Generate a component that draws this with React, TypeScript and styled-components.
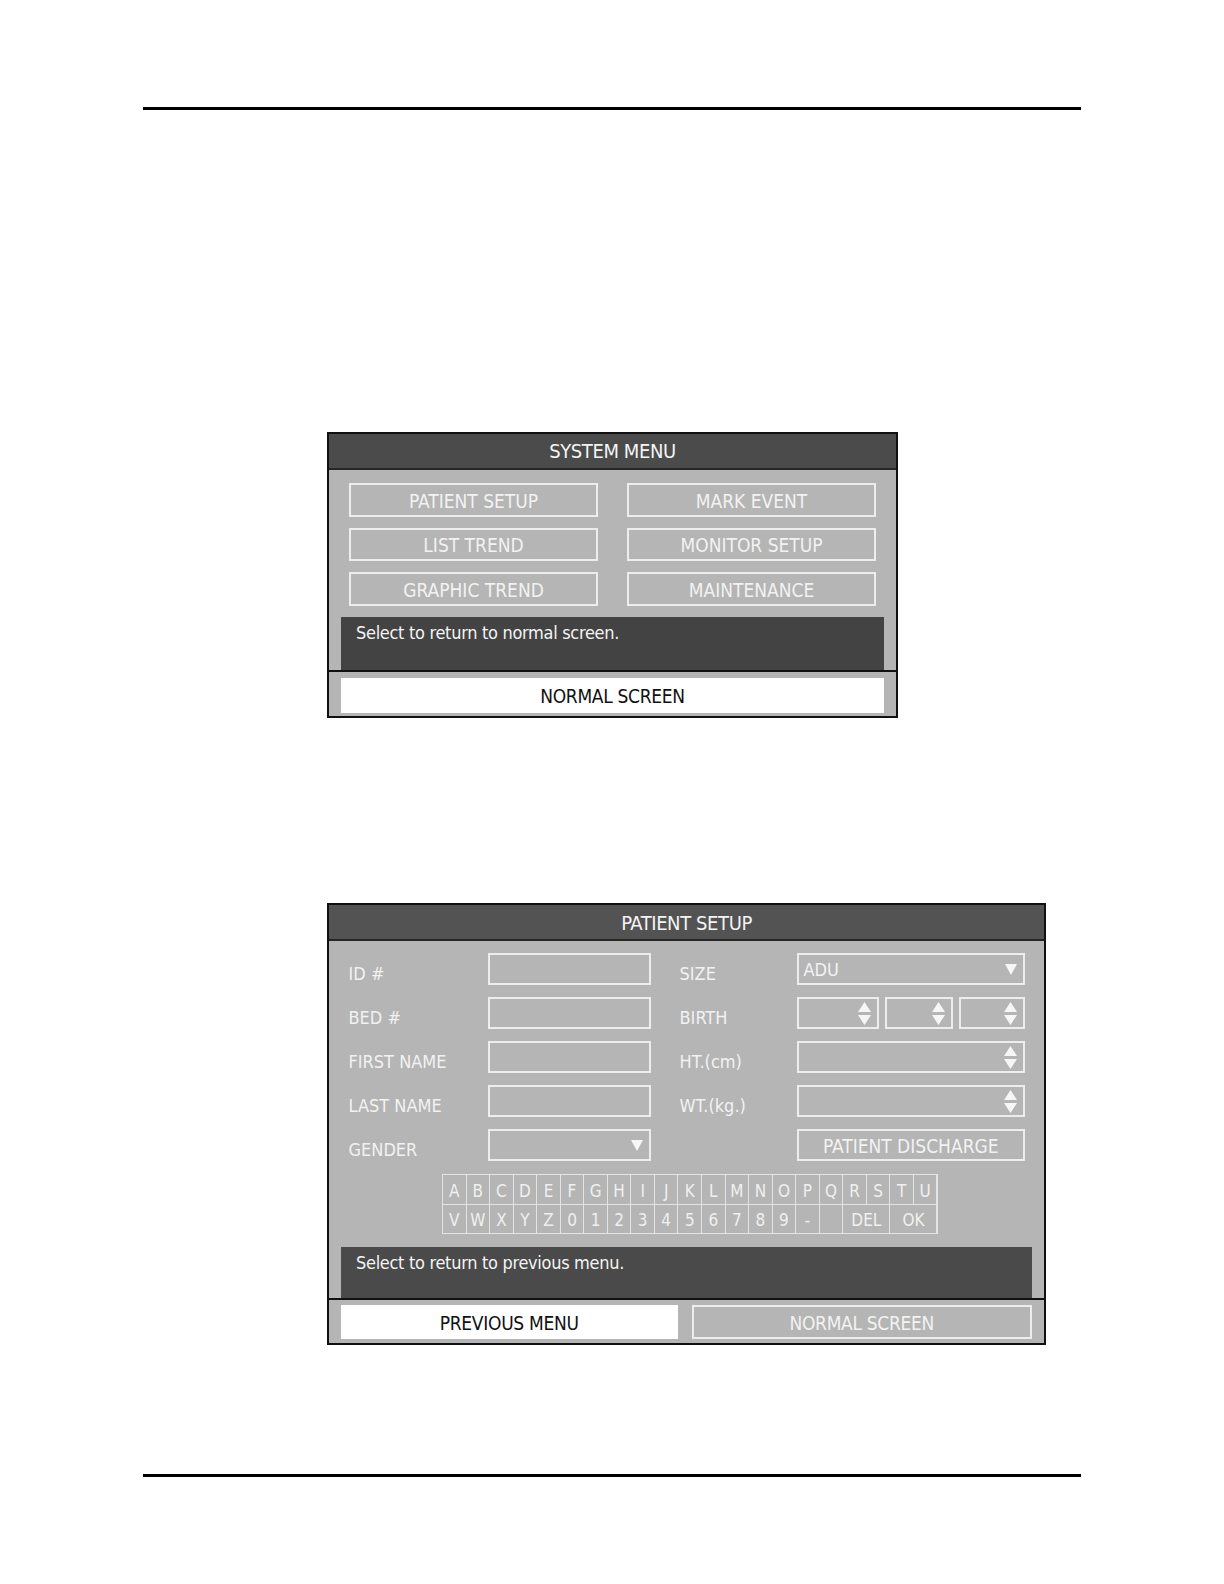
import React from "react";
import styled, { createGlobalStyle } from "styled-components";

const GlobalStyle = createGlobalStyle`
  html, body {
    margin: 0;
    padding: 0;
    background: #ffffff;
  }
`;

const FONT = `"Liberation Sans Narrow", "DejaVu Sans Condensed", "Liberation Sans", Arial, sans-serif`;

const Page = styled.div`
  width: 1224px;
  height: 1584px;
  box-sizing: border-box;
  padding: 107px 143px 0 143px;
  font-family: ${FONT};
`;

const Rule = styled.div<{ $top?: number }>`
  height: 3px;
  background: #000;
  margin-top: ${(p) => p.$top ?? 0}px;
`;

const Figure = styled.div<{ $top: number }>`
  margin-top: ${(p) => p.$top}px;
  margin-left: 184px;
`;

const Panel = styled.div<{ $w: number }>`
  width: ${(p) => p.$w}px;
  box-sizing: border-box;
  border: 2px solid #111;
  background: #b5b5b5;
`;

const TitleBar = styled.div<{ $tone?: string; $h: number }>`
  height: ${(p) => p.$h}px;
  box-sizing: border-box;
  background: ${(p) => p.$tone ?? "#4b4b4b"};
  border-bottom: 2px solid #262626;
  color: #f4f4f4;
  font-size: 20px;
  letter-spacing: -0.4px;
  display: flex;
  align-items: center;
  justify-content: center;
  padding-top: 1px;
`;

const Body = styled.div<{ $pt: number }>`
  padding: ${(p) => p.$pt}px 12px 0;
`;

/* ---------- system menu ---------- */

const MenuGrid = styled.div`
  display: grid;
  grid-template-columns: 249px 249px;
  grid-auto-rows: 33.5px;
  column-gap: 29px;
  row-gap: 11px;
  padding: 0 8px;
`;

const GhostButton = styled.div`
  box-sizing: border-box;
  border: 2px solid #ededed;
  color: #f2f2f2;
  font-size: 19px;
  display: flex;
  align-items: center;
  justify-content: center;
  padding-top: 2px;
`;

const Message = styled.div<{ $h: number; $mt: number; $tone: string }>`
  height: ${(p) => p.$h}px;
  margin-top: ${(p) => p.$mt}px;
  box-sizing: border-box;
  background: ${(p) => p.$tone};
  color: #f4f4f4;
  font-size: 18px;
  letter-spacing: -0.3px;
  padding: 5px 0 0 15px;
`;

const Footer = styled.div<{ $pt: number; $pb: number }>`
  border-top: 2px solid #111;
  padding: ${(p) => p.$pt}px 12px ${(p) => p.$pb}px;
  display: flex;
  gap: 14px;
`;

const SolidButton = styled.div<{ $h: number }>`
  flex: 1;
  height: ${(p) => p.$h}px;
  background: #fff;
  color: #111;
  font-size: 19px;
  letter-spacing: -0.3px;
  display: flex;
  align-items: center;
  justify-content: center;
  padding-top: 2px;
  box-sizing: border-box;
`;

const FooterGhost = styled(GhostButton)<{ $h: number }>`
  flex: 1;
  height: ${(p) => p.$h}px;
  letter-spacing: -0.3px;
`;

/* ---------- patient setup ---------- */

const Form = styled.div`
  display: grid;
  grid-template-columns: 139.5px 163px 28.5px 117px 228.5px;
  grid-auto-rows: 32.4px;
  row-gap: 11.6px;
  padding: 0 7px 0 7.5px;
`;

const Label = styled.div`
  color: #f2f2f2;
  font-size: 18px;
  display: flex;
  align-items: center;
  padding-top: 8px;
`;

const Field = styled.div`
  box-sizing: border-box;
  border: 2px solid #ededed;
  color: #f2f2f2;
  font-size: 18px;
  display: flex;
  align-items: center;
  justify-content: space-between;
  padding: 0 6px 0 5px;
`;

const Spacer = styled.div``;

const BirthRow = styled.div`
  display: grid;
  grid-template-columns: 82px 68px 66.5px;
  column-gap: 6px;
`;

const Keyboard = styled.div`
  width: 495.5px;
  margin: 13px 0 0 101px;
  box-sizing: border-box;
  display: grid;
  grid-template-columns: repeat(21, 1fr);
  grid-auto-rows: 28.5px;
  gap: 1px;
  padding: 1px;
  background: #e4e4e4;
`;

const Key = styled.div<{ $span?: number }>`
  grid-column: span ${(p) => p.$span ?? 1};
  background: #b5b5b5;
  color: #f0f0f0;
  font-size: 17px;
  display: flex;
  align-items: center;
  justify-content: center;
  padding-top: 2px;
`;

const DropArrow = () => (
  <svg width="12" height="11" viewBox="0 0 12 11">
    <polygon points="0,0 12,0 6,11" fill="#f6f6f6" />
  </svg>
);

const SpinArrows = () => (
  <svg width="13" height="23" viewBox="0 0 13 23">
    <polygon points="6.5,0 13,10 0,10" fill="#f6f6f6" />
    <polygon points="0,13 13,13 6.5,23" fill="#f6f6f6" />
  </svg>
);

const row1 = "ABCDEFGHIJKLMNOPQRSTU".split("");
const row2: { k: string; span?: number }[] = [
  ..."VWXYZ0123456789-".split("").map((k) => ({ k })),
  { k: "" },
  { k: "DEL", span: 2 },
  { k: "OK", span: 2 },
];

const App = () => {
  return (
    <Page>
      <GlobalStyle />
      <Rule />

      <Figure $top={322}>
        <Panel $w={571}>
          <TitleBar $h={35.5}>SYSTEM MENU</TitleBar>
          <Body $pt={13.5}>
            <MenuGrid>
              <GhostButton>PATIENT SETUP</GhostButton>
              <GhostButton>MARK EVENT</GhostButton>
              <GhostButton>LIST TREND</GhostButton>
              <GhostButton>MONITOR SETUP</GhostButton>
              <GhostButton>GRAPHIC TREND</GhostButton>
              <GhostButton>MAINTENANCE</GhostButton>
            </MenuGrid>
            <Message $h={53} $mt={11} $tone="#434343">
              Select to return to normal screen.
            </Message>
          </Body>
          <Footer $pt={6} $pb={3}>
            <SolidButton $h={35.5}>NORMAL SCREEN</SolidButton>
          </Footer>
        </Panel>
      </Figure>

      <Figure $top={185}>
        <Panel $w={719}>
          <TitleBar $tone="#535353" $h={36}>
            PATIENT SETUP
          </TitleBar>
          <Body $pt={12}>
            <Form>
              <Label>ID #</Label>
              <Field />
              <Spacer />
              <Label>SIZE</Label>
              <Field>
                ADU
                <DropArrow />
              </Field>

              <Label>BED #</Label>
              <Field />
              <Spacer />
              <Label>BIRTH</Label>
              <BirthRow>
                <Field>
                  <span />
                  <SpinArrows />
                </Field>
                <Field>
                  <span />
                  <SpinArrows />
                </Field>
                <Field>
                  <span />
                  <SpinArrows />
                </Field>
              </BirthRow>

              <Label>FIRST NAME</Label>
              <Field />
              <Spacer />
              <Label>HT.(cm)</Label>
              <Field>
                <span />
                <SpinArrows />
              </Field>

              <Label>LAST NAME</Label>
              <Field />
              <Spacer />
              <Label>WT.(kg.)</Label>
              <Field>
                <span />
                <SpinArrows />
              </Field>

              <Label>GENDER</Label>
              <Field>
                <span />
                <DropArrow />
              </Field>
              <Spacer />
              <Spacer />
              <GhostButton>PATIENT DISCHARGE</GhostButton>
            </Form>

            <Keyboard>
              {row1.map((k) => (
                <Key key={k}>{k}</Key>
              ))}
              {row2.map((r, i) => (
                <Key key={"b" + i} $span={r.span}>
                  {r.k}
                </Key>
              ))}
            </Keyboard>

            <Message $h={50.6} $mt={13} $tone="#4a4a4a">
              Select to return to previous menu.
            </Message>
          </Body>
          <Footer $pt={5} $pb={4}>
            <SolidButton $h={34.4}>PREVIOUS MENU</SolidButton>
            <FooterGhost $h={34.4}>NORMAL SCREEN</FooterGhost>
          </Footer>
        </Panel>
      </Figure>

      <Rule $top={129} />
    </Page>
  );
};

export default App;
